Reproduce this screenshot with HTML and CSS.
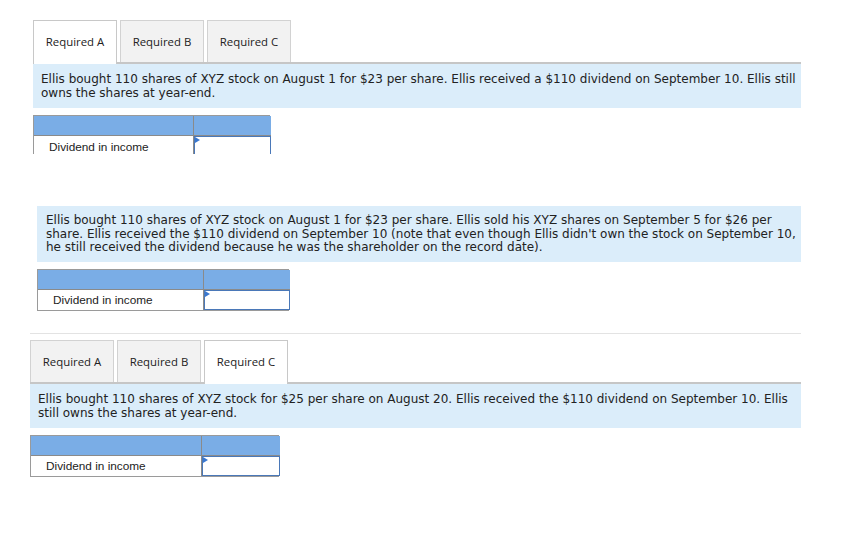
FILE: index.html
```html
<!DOCTYPE html>
<html>
<head>
<meta charset="utf-8">
<link rel="stylesheet" href="styles.css">
</head>
<body>
<section class="part part-a">
  <div class="tabs">
    <div class="tab active">Required A</div>
    <div class="tab">Required B</div>
    <div class="tab">Required C</div>
  </div>
  <div class="prompt p-a">Ellis bought 110 shares of XYZ stock on August 1 for $23 per share. Ellis received a $110 dividend on September 10. Ellis still owns the shares at year-end.</div>
  <div class="grid grid-a">
    <div class="head c1"></div>
    <div class="head c2"></div>
    <div class="label open">Dividend in income</div>
    <div class="input open"></div>
  </div>
</section>

<section class="part part-b">
  <div class="prompt p-b">Ellis bought 110 shares of XYZ stock on August 1 for $23 per share. Ellis sold his XYZ shares on September 5 for $26 per share. Ellis received the $110 dividend on September 10 (note that even though Ellis didn't own the stock on September 10, he still received the dividend because he was the shareholder on the record date).</div>
  <div class="grid grid-b">
    <div class="head c1"></div>
    <div class="head c2"></div>
    <div class="label">Dividend in income</div>
    <div class="input"></div>
  </div>
</section>

<hr class="sep">

<section class="part part-c">
  <div class="tabs">
    <div class="tab">Required A</div>
    <div class="tab">Required B</div>
    <div class="tab active">Required C</div>
  </div>
  <div class="prompt p-c">Ellis bought 110 shares of XYZ stock for $25 per share on August 20. Ellis received the $110 dividend on September 10. Ellis still owns the shares at year-end.</div>
  <div class="grid grid-c">
    <div class="head c1"></div>
    <div class="head c2"></div>
    <div class="label">Dividend in income</div>
    <div class="input"></div>
  </div>
</section>
</body>
</html>
```

FILE: styles.css
```css
* { box-sizing: border-box; }
body {
  margin: 0;
  background: #ffffff;
  font-family: "DejaVu Sans", Verdana, sans-serif;
  color: #222222;
}
.part { width: 801px; }
.part-a { padding: 20px 0 0 33px; }
.part-b { padding: 52px 0 0 37px; }
.part-c { padding: 6px 0 0 30px; }

.tabs {
  display: flex;
  gap: 3px;
  height: 42px;
}
.tab {
  width: 84px;
  height: 42px;
  background: #f2f2f2;
  border: 1px solid #d2d2d2;
  border-bottom: none;
  display: flex;
  align-items: center;
  justify-content: center;
  padding-bottom: 1px;
  font-family: "Open Sans", "Noto Sans", sans-serif;
  font-size: 11.4px;
  color: #222;
}
.tab.active {
  background: #ffffff;
  border-color: #c8c8c8;
  position: relative;
  z-index: 1;
  height: 44px;
  padding-bottom: 3px;
  margin-bottom: -2px;
}

.prompt {
  background: #dbedfa;
  font-size: 12px;
  line-height: 13.5px;
}
.p-a, .p-c { border-top: 2px solid #c6c6c6; padding: 9px 1px 9px 8px; height: 46px; }
.p-b { padding: 8px 1px 8px 9px; height: 56px; }

.grid {
  display: grid;
  margin-top: 7px;
  border: 1px solid #9a9a9a;
  font-family: "Liberation Sans", Arial, sans-serif;
  font-size: 11.8px;
  color: #222;
}
.grid-a { grid-template-columns: 160px 77px; width: 237px; border-bottom: none; }
.grid-b { grid-template-columns: 166px 86px; width: 252px; }
.grid-c { grid-template-columns: 171px 78px; width: 249px; }

.head {
  height: 20px;
  background: #7aade6;
  border-bottom: 1px solid #8a8a8a;
}
.head.c1 { border-right: 1px solid #8a8a8a; }
.label {
  height: 20px;
  padding-left: 15px;
  display: flex;
  align-items: center;
  border-right: 1px solid #8a8a8a;
  background: #fff;
}
.label.open { height: 18px; padding-top: 3px; }
.input {
  height: 20px;
  border: 1px solid #4a78b8;
  position: relative;
  background: #fff;
}
.input.open { border-bottom: none; height: 18px; }
.input::before {
  content: "";
  position: absolute;
  left: 0;
  top: 0;
  border-top: 3px solid transparent;
  border-bottom: 3px solid transparent;
  border-left: 5px solid #3a78d0;
}

.sep {
  margin: 22px 0 0 30px;
  width: 771px;
  border: none;
  border-top: 1px solid #e3e3e3;
  height: 0;
}
```
